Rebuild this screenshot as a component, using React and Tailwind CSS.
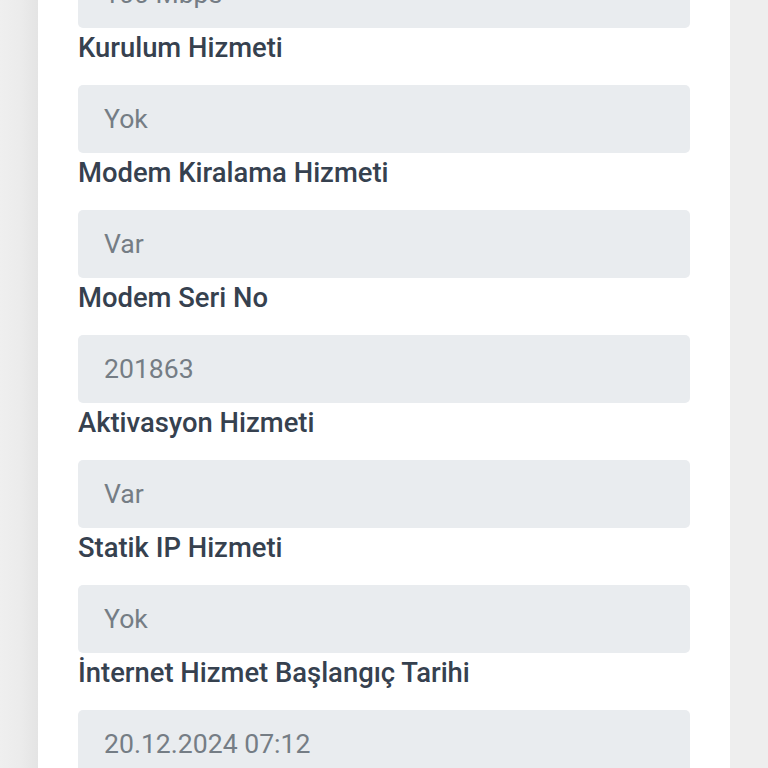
const fields = [
  { label: null, value: "100 Mbps" },
  { label: "Kurulum Hizmeti", value: "Yok" },
  { label: "Modem Kiralama Hizmeti", value: "Var" },
  { label: "Modem Seri No", value: "201863" },
  { label: "Aktivasyon Hizmeti", value: "Var" },
  { label: "Statik IP Hizmeti", value: "Yok" },
  { label: "İnternet Hizmet Başlangıç Tarihi", value: "20.12.2024 07:12" },
];

export default function App() {
  return (
    <div
      className="h-[768px] w-[768px] overflow-hidden bg-[#eeeeee] flex"
      style={{ fontFamily: "Roboto, 'Noto Sans', sans-serif" }}
    >
      <div className="w-[38px] shrink-0 bg-gradient-to-r from-[#efefef] via-[#ececec] to-[#e4e4e4]" />
      <div className="w-[692px] shrink-0 bg-white pl-[40px] pr-[40px]">
        <div className="mt-[-40px] flex flex-col">
          {fields.map((f, i) => (
            <div key={i} className="flex flex-col">
              {f.label && (
                <label className="pt-[2px] pb-[19px] text-[27.4px] leading-[36px] font-medium text-[#36414f]">
                  {f.label}
                </label>
              )}
              <div className="h-[68px] rounded-[5px] bg-[#e9ecef] flex items-center pl-[26px] text-[26.6px] text-[#757d85]">
                {f.value}
              </div>
            </div>
          ))}
        </div>
      </div>
      <div className="flex-1 bg-[#eeeeee]" />
    </div>
  );
}
